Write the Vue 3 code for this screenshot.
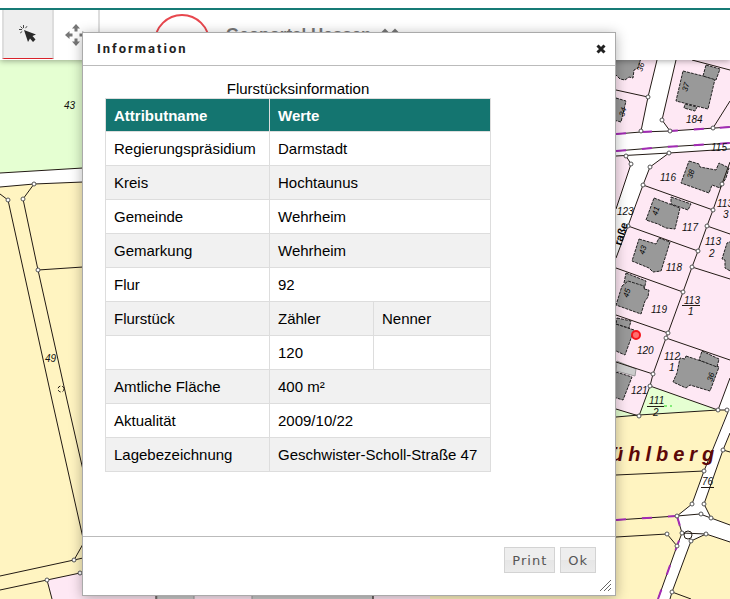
<script setup>
import { ref } from 'vue'

const tool = ref('select')

const rows = [
  ['Regierungspräsidium', 'Darmstadt'],
  ['Kreis', 'Hochtaunus'],
  ['Gemeinde', 'Wehrheim'],
  ['Gemarkung', 'Wehrheim'],
  ['Flur', '92'],
  ['Flurstück', 'Zähler', 'Nenner'],
  ['', '120', ''],
  ['Amtliche Fläche', '400 m²'],
  ['Aktualität', '2009/10/22'],
  ['Lagebezeichnung', 'Geschwister-Scholl-Straße 47'],
]

const areas = [
  { kind: 'green', points: '0,60 83,60 83,168 0,173' },
  { kind: 'yellow', points: '0,187 34,184 83,182 300,172 300,599 0,599' },
  { kind: 'pink', points: '47,580 80,573 430,500 430,599 52,599' },
  { kind: 'yellow', points: '430,500 616,416 718,410 730,410 730,599 430,599' },
  { kind: 'pink', points: '600,60 657,60 648,97 641,131 600,134' },
  { kind: 'pink', points: '676,60 730,60 730,127 670,131 662,120' },
  { kind: 'pink', points: '600,156 626,156 631,164 616,210 600,250' },
  { kind: 'pink', points: '669,153 730,149 730,378 718,410 650,386 639,416 600,405 600,300 616,258 628,226 643,185 650,167' },
  { kind: 'green', points: '650,386 718,410 639,415' },
  { kind: 'green', points: '600,405 616,409 639,416 600,418' },
  { kind: 'road', points: '677,516 692,504 704,471 728,410 730,410 730,433 723,450 704,504 711,518 730,525 730,542 706,534 691,541 672,592 670,599 658,599 677,546 682,533' },
]

const buildings = [
  '610,58 641,58 638,68 634,70 633,78 629,77 625,80 620,79 616,75 610,74',
  '616,98 626,101 621,122 610,119',
  '683,71 715,79 708,109 676,101',
  '706,65 720,69 716,80 703,76',
  '685,104 697,107 695,111 684,108',
  '689,161 699,164 700,167 716,170 719,163 729,168 726,178 720,188 712,185 709,193 681,183',
  '654,198 680,208 675,229 666,228 658,224 646,220',
  '671,197 691,204 688,210 671,204',
  '639,239 656,244 659,238 670,242 661,271 653,272 649,268 632,261',
  '626,273 646,281 644,290 624,283',
  '622,286 628,281 644,286 644,289 649,290 648,297 645,301 641,314 616,305',
  '616,324 634,330 625,355 616,351 610,340',
  '617,318 631,321 629,328 616,324',
  '616,372 632,377 623,400 610,396',
  '686,356 719,367 710,391 690,385 686,388 673,382 677,373 680,358 685,359',
  '702,351 719,359 717,367 699,360',
  '732,241 727,243 722,259 725,260 725,268 732,272',
]

const plainBuildings = [
  '157,590 194,590 194,602 157,602',
  '252,590 373,590 373,602 252,602',
]

const lines = [
  '0,173 83,168', '0,187 34,184 83,182', '34,184 23,199', '0,194 8,200',
  '8,200 52,400 83,538', '23,199 38,270 67,400 83,470', '38,270 83,267',
  '0,576 74,560 83,558', '74,560 83,544', '0,590 47,580 80,573', '47,580 52,599',
  '657,60 648,97 641,131', '676,60 662,120 670,131', '616,90 648,97', '730,101 713,128',
  '692,60 730,70', '616,134 641,132 670,131 730,127', '616,151 665,147 730,143', '616,156 669,153 730,149',
  '626,156 631,164 616,209', '669,153 650,167 643,185 628,226 616,258',
  '643,185 713,210', '730,162 722,184 713,210 707,226 698,251 692,267 683,292 668,333 666,338 653,374 650,386 639,416',
  '628,226 698,251', '707,226 730,234', '692,267 730,279', '616,268 683,292',
  '616,315 668,333', '666,338 730,360', '616,362 653,374', '650,386 718,410 730,378',
  '616,409 639,416', '616,417 639,415 718,410 727,410', '616,475 704,471 728,412',
  '704,471 692,504 677,516', '730,433 723,450 704,504 711,518 730,525', '723,450 730,452',
  '616,520 677,516 700,514 711,518', '616,537 667,534 677,546', '677,516 682,533 677,546 658,599',
  '682,533 706,534 730,542', '706,534 691,541 672,592 670,599', '672,592 691,599',
  '156,590 156,599', '373,590 373,599',
]

const borders = ['616,134 641,132 670,131 730,127', '616,151 665,147 730,143', '616,520 677,516', '677,516 682,533 677,546 658,599']

const nodes = [
  [34, 184], [23, 199], [8, 200], [38, 270], [74, 560], [47, 580], [80, 573],
  [648, 97], [662, 120], [670, 131], [713, 128], [641, 131], [626, 156], [631, 164],
  [669, 153], [650, 167], [643, 185], [628, 226], [722, 184], [713, 210], [707, 226],
  [698, 251], [692, 267], [683, 292], [668, 333], [666, 338], [653, 374], [650, 386],
  [639, 416], [718, 410], [727, 410], [704, 471], [692, 504], [677, 516], [723, 450],
  [704, 504], [711, 518], [701, 514], [667, 534], [677, 546], [682, 533], [706, 534],
  [691, 541], [672, 592],
]

const labels = [
  [64, 109, '43'], [45, 362, '49'], [686, 123, '184'], [711, 151, '115'], [660, 181, '116'],
  [617, 215, '123'], [682, 231, '117'], [717, 207, '113'], [723, 218, '3'], [705, 245, '113'],
  [709, 257, '2'], [666, 271, '118'], [651, 313, '119'], [684, 304, '113'], [688, 315, '1'],
  [637, 354, '120'], [664, 360, '112'], [669, 371, '1'], [631, 394, '121'], [649, 404, '111'],
  [653, 416, '2'], [702, 485, '76'],
]

const houseNumbers = [
  [642, 72, '36'], [624, 117, '34'], [687, 92, '37'], [692, 179, '38'], [657, 216, '41'],
  [644, 255, '43'], [628, 298, '45'], [712, 382, '36'],
]
</script>

<template>
  <div class="page">
    <header class="topbar">
      <nav class="tools" aria-label="Werkzeuge">
        <button type="button" class="tool" :class="{ active: tool === 'select' }" aria-label="Abfrage" @click="tool = 'select'">
          <svg width="18" height="18" viewBox="0 0 18 18">
            <path d="M5 5 17 9.500 13.500 11 16.500 14.500 14 17 11 13.500 9 17Z" fill="#292929" />
            <path d="M4.500 0v3M0 4.500h3M1.500 1.500l2 2M8 1.200l-1.500 2M1.200 8l2-1.500" stroke="#444" stroke-width="1" />
          </svg>
        </button>
        <button type="button" class="tool" :class="{ active: tool === 'pan' }" aria-label="Verschieben" @click="tool = 'pan'">
          <svg width="22" height="22" viewBox="0 0 22 22" fill="#777">
            <path d="M11 0 15 4.500H12.500V7.500H9.500V4.500H7ZM11 22 7 17.500H9.500V14.500H12.500V17.500H15ZM0 11 4.500 7V9.500H7.500V12.500H4.500V15ZM22 11 17.500 15V12.500H14.500V9.500H17.500V7Z" />
          </svg>
        </button>
      </nav>
      <div class="brand">
        <svg class="logo" width="56" height="56" viewBox="0 0 56 56">
          <circle cx="28" cy="28" r="27" fill="none" stroke="#e8474e" stroke-width="2" />
        </svg>
        <a class="brand-name" href="#">
          <span>Geoportal Hessen</span>
          <svg width="20" height="12" viewBox="0 0 20 12" fill="none" stroke="#777" stroke-width="2">
            <path d="M1 9 5 5 9 9M11 9 15 5 19 9" />
          </svg>
        </a>
      </div>
    </header>

    <main class="map">
      <svg class="map-canvas" viewBox="0 60 730 539" preserveAspectRatio="xMinYMin slice" role="img" aria-label="Karte">
        <rect y="60" width="730" height="539" fill="#fff" />
        <polygon v-for="(a, i) in areas" :key="'a' + i" :points="a.points" :class="a.kind" />
        <polygon v-for="(b, i) in buildings" :key="'b' + i" :points="b" class="building" />
        <polygon v-for="(b, i) in plainBuildings" :key="'g' + i" :points="b" class="shed" />
        <polygon points="617,361 636,369 635,376 616,371" class="shed" />
        <polyline v-for="(l, i) in lines" :key="'l' + i" :points="l" class="line" />
        <polyline v-for="(l, i) in borders" :key="'p' + i" :points="l" class="border" />
        <circle v-for="([x, y], i) in nodes" :key="'n' + i" :cx="x" :cy="y" r="2" class="node" />
        <circle cx="61" cy="389" r="3" class="line" stroke-dasharray="3 2" />
        <circle cx="688" cy="535" r="4" class="line" />
        <path d="M682 305.500H700M647 406.500H664M701 487.500H714" class="line" />
        <path d="M664 406h3M670 406h2" stroke="#1fd51f" />
        <text v-for="([x, y, t], i) in labels" :key="'t' + i" :x="x" :y="y" class="label">{{ t }}</text>
        <text v-for="([x, y, t], i) in houseNumbers" :key="'h' + i" :transform="`translate(${x} ${y}) rotate(-72)`" class="house">{{ t }}</text>
        <text transform="translate(621 246) rotate(-72)" class="street">raße</text>
        <text x="611" y="461" class="place">ühlberg</text>
        <circle cx="636" cy="335" r="4" fill="#ff7070" stroke="#f5151b" stroke-width="2" />
      </svg>
    </main>

    <section class="dialog" role="dialog" aria-labelledby="dialog-title">
      <div class="titlebar">
        <h1 id="dialog-title">Information</h1>
        <button type="button" class="close" aria-label="Schließen">
          <svg width="10" height="10" viewBox="0 0 10 10" stroke="#222" stroke-width="3">
            <path d="M1.500 1.500 8.500 8.500M8.500 1.500 1.500 8.500" />
          </svg>
        </button>
      </div>
      <div class="content">
        <table>
          <caption>Flurstücksinformation</caption>
          <colgroup>
            <col class="col-name">
            <col class="col-value">
            <col class="col-extra">
          </colgroup>
          <thead>
            <tr>
              <th scope="col">Attributname</th>
              <th scope="col" colspan="2">Werte</th>
            </tr>
          </thead>
          <tbody>
            <tr v-for="(row, i) in rows" :key="i">
              <td v-for="(cell, j) in row" :key="j" :colspan="row.length === 2 && j === 1 ? 2 : 1">{{ cell }}</td>
            </tr>
          </tbody>
        </table>
      </div>
      <div class="actions">
        <button type="button">Print</button>
        <button type="button">Ok</button>
      </div>
      <svg class="grip" width="12" height="12" viewBox="0 0 12 12" stroke="#666" stroke-width="1">
        <path d="M0 11 11 0M4 11 11 4M8 11 11 8" />
      </svg>
    </section>
  </div>
</template>

<style>
body {
  background: #fff;
}
</style>

<style scoped>
.page {
  position: relative;
  display: flex;
  flex-direction: column;
  min-height: 100vh;
  overflow: hidden;
  font-family: "Liberation Sans", Arial, sans-serif;
}

.topbar {
  position: relative;
  z-index: 1;
  display: flex;
  box-sizing: border-box;
  height: 60px;
  padding-top: 8px;
  background: linear-gradient(#fff 8px, #167b76 8px, #167b76 10px, #fff 10px);
  box-shadow: 0 1px 6px rgba(0, 0, 0, 0.35);
}

.tools {
  display: flex;
  margin-left: 2px;
  padding: 2px 0 1px;
}

.tool {
  display: flex;
  align-items: center;
  justify-content: center;
  box-sizing: border-box;
  width: 52px;
  padding: 0;
  border: 0 solid #ddd;
  border-width: 0 2px;
  background: #fff;
}

.tool + .tool {
  width: 46px;
  border-left: 0;
}

.tool.active {
  border-bottom: 1px solid #d8222a;
  background: #eee;
}

.brand {
  display: flex;
  align-items: flex-start;
  gap: 16px;
  height: 52px;
  margin-left: 54px;
  padding-top: 6px;
  box-sizing: border-box;
  overflow: hidden;
}

.logo {
  flex: none;
}

.brand-name {
  display: flex;
  gap: 8px;
  padding-top: 11px;
  color: #777;
  font-size: 17px;
  font-weight: bold;
  line-height: 20px;
  text-decoration: none;
}

.map {
  display: flex;
  flex: 1;
}

.map-canvas {
  display: block;
  width: 100%;
}

.green { fill: #e5ffd2; }
.yellow { fill: #fff4c1; }
.pink { fill: #fee8f4; }
.road { fill: #fff; }

.building {
  fill: #999;
  stroke: #222;
  stroke-dasharray: 3 1;
}

.shed {
  fill: #ccc;
  stroke: #999;
}

.line {
  fill: none;
  stroke: #221a14;
  stroke-width: 1;
}

.border {
  fill: none;
  stroke: #a32bb5;
  stroke-width: 2;
  stroke-dasharray: 10 16;
}

.node {
  fill: #fff;
  stroke: #555;
}

.label {
  font-size: 10px;
  font-style: italic;
  fill: #111;
}

.house {
  font-size: 8px;
  font-style: italic;
}

.street {
  font-size: 11px;
  font-weight: bold;
}

.place {
  fill: #5c0808;
  font-size: 20px;
  font-style: italic;
  font-weight: bold;
  letter-spacing: 5px;
}

.dialog {
  position: absolute;
  z-index: 2;
  top: 32px;
  left: 82px;
  box-sizing: border-box;
  width: 534px;
  border: 1px solid #aaa;
  background: #fff;
  box-shadow: 0 2px 12px rgba(0, 0, 0, 0.3);
}

.titlebar {
  display: flex;
  align-items: center;
  justify-content: space-between;
  height: 32px;
  padding: 0 9px 0 14px;
  border-bottom: 1px solid #bbb;
}

h1 {
  margin: 0;
  color: #222;
  font: bold 13px/20px Roboto, sans-serif;
  letter-spacing: 2px;
}

.close {
  display: flex;
  padding: 0;
  border: 0;
  background: none;
}

.content {
  padding: 14px 22px 64px;
}

table {
  border-collapse: collapse;
  color: #000;
  font-size: 15px;
  line-height: 18px;
}

.col-name { width: 164px; }
.col-value { width: 104px; }
.col-extra { width: 117px; }

caption {
  line-height: 18px;
}

th,
td {
  height: 18px;
  padding: 8px 8px 7px;
  border: 1px solid #ddd;
  text-align: left;
}

th {
  padding-bottom: 6px;
  background: #147570;
  color: #fff;
}

tbody tr:nth-child(even) {
  background: #f1f1f1;
}

.actions {
  display: flex;
  justify-content: flex-end;
  gap: 5px;
  padding: 10px 19px 22px;
  border-top: 1px solid #bbb;
}

.actions button {
  height: 26px;
  padding: 0 7px;
  border: 1px solid #d3d3d3;
  background: linear-gradient(#eee 50%, #e6e6e6 50%, #ebebeb);
  color: #555;
  font: 13px "DejaVu Sans", Verdana, sans-serif;
  letter-spacing: 1px;
}

.grip {
  position: absolute;
  right: 3px;
  bottom: 3px;
}
</style>
